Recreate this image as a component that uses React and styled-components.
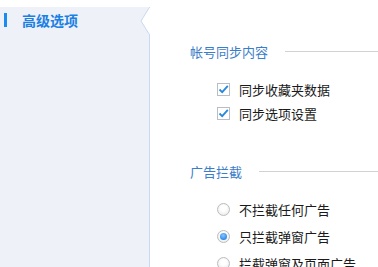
import React from 'react';
import styled, { createGlobalStyle } from 'styled-components';

const GlobalStyle = createGlobalStyle`
  body {
    margin: 0;
    background: #ffffff;
    font-family: "Microsoft YaHei", "Noto Sans CJK SC", "Noto Sans", sans-serif;
    overflow: hidden;
  }
`;

const Page = styled.div`
  display: flex;
  width: 378px;
  height: 267px;
  overflow: hidden;
`;

const Sidebar = styled.div`
  position: relative;
  flex: 0 0 149px;
  margin-top: 7px;
  background: #eef2f8;
  border-right: 1px solid #c9d9ef;
`;

const NavItem = styled.div`
  position: relative;
  display: flex;
  align-items: center;
  height: 26px;
  padding-left: 22px;
  font-size: 14px;
  font-weight: bold;
  color: ${({ active }) => (active ? '#1b7fe3' : '#333')};

  &::before {
    content: '';
    display: ${({ active }) => (active ? 'block' : 'none')};
    position: absolute;
    left: 4px;
    top: 6px;
    width: 3px;
    height: 14px;
    background: #1a8cf0;
  }
`;

const Notch = styled.svg`
  position: absolute;
  right: -1px;
  top: 0;
`;

const Content = styled.div`
  flex: 1;
  padding: 41px 0 0 40px;
`;

const Section = styled.div`
  margin-bottom: 36px;
`;

const Heading = styled.div`
  display: flex;
  align-items: center;
  gap: 17px;
  height: 20px;
  font-size: 13px;
  color: #3b7dc8;

  &::after {
    content: '';
    flex: 1;
    height: 1px;
    background: #d2d2d2;
  }
`;

const List = styled.div`
  margin-top: ${({ rowHeight }) => 28 - rowHeight / 2}px;
  padding-left: 27px;
`;

const Row = styled.label`
  display: flex;
  align-items: center;
  gap: 9px;
  height: ${({ rowHeight }) => rowHeight}px;
  font-size: 13px;
  color: #1a1a1a;
  white-space: nowrap;
`;

const Box = styled.span`
  display: flex;
  align-items: center;
  justify-content: center;
  width: 11px;
  height: 11px;
  border: 1px solid #b9bec6;
  background: #fff;
`;

const Radio = styled.span`
  display: flex;
  align-items: center;
  justify-content: center;
  width: 11px;
  height: 11px;
  border-radius: 50%;
  border: 1px solid #bcbcbc;
  background: radial-gradient(circle at 50% 40%, #ffffff 30%, #e4e4e4 100%);

  &::after {
    content: '';
    display: ${({ checked }) => (checked ? 'block' : 'none')};
    width: 7px;
    height: 7px;
    border-radius: 50%;
    background: radial-gradient(circle at 45% 35%, #8cc4ff 0%, #2d8ae8 70%);
  }
`;

const Check = () => (
  <svg width="11" height="11" viewBox="0 0 11 11">
    <path d="M1.5 5.5 L4.2 8.2 L9.8 1.8" fill="none" stroke="#2a88dc" strokeWidth="1.8" />
  </svg>
);

const CheckRow = ({ children }) => (
  <Row rowHeight={24}>
    <Box><Check /></Box>
    {children}
  </Row>
);

const RadioRow = ({ checked, children }) => (
  <Row rowHeight={27}>
    <Radio checked={checked} />
    {children}
  </Row>
);

const App = () => {
  return (
    <>
      <GlobalStyle />
      <Page>
        <Sidebar>
          <NavItem active>高级选项</NavItem>
          <Notch width="10" height="28" viewBox="0 0 10 28">
            <polygon points="10,0 10,28 9,27 1,14 9,1" fill="#ffffff" />
            <polyline points="10,0 9,1 1,14 9,27 10,28" fill="none" stroke="#c9d9ef" strokeWidth="1" />
          </Notch>
        </Sidebar>
        <Content>
          <Section>
            <Heading>帐号同步内容</Heading>
            <List rowHeight={24}>
              <CheckRow>同步收藏夹数据</CheckRow>
              <CheckRow>同步选项设置</CheckRow>
            </List>
          </Section>
          <Section>
            <Heading>广告拦截</Heading>
            <List rowHeight={27}>
              <RadioRow>不拦截任何广告</RadioRow>
              <RadioRow checked>只拦截弹窗广告</RadioRow>
              <RadioRow>拦截弹窗及页面广告</RadioRow>
            </List>
          </Section>
        </Content>
      </Page>
    </>
  );
};

export default App;
